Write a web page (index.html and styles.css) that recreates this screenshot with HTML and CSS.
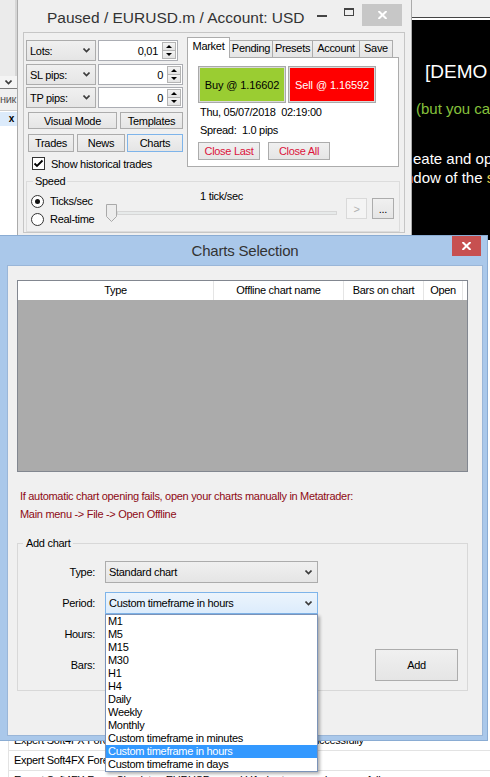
FILE: index.html
```html
<!DOCTYPE html>
<html lang="en">
<head>
  <meta charset="UTF-8">
  <meta name="viewport" content="width=device-width, initial-scale=1.0">
  <title>Forex Simulator</title>
  <link rel="stylesheet" href="styles.css">
</head>
<body>
  <!-- navigator panel, mostly hidden behind the tester -->
  <div class="nav-strip">
    <div class="nav-head"></div>
    <div class="nav-combo">
      <svg class="chev" width="7" height="5" viewBox="0 0 7 5"><polyline points="0.5,0.5 3.5,3.5 6.5,0.5"/></svg>
    </div>
    <div class="nav-row">ник</div>
    <div class="nav-sel">x</div>
  </div>

  <!-- chart window -->
  <div class="chart-win">
    <div class="chart-top"></div>
    <p class="chart-demo">[DEMO</p>
    <p class="chart-note">(but you ca</p>
    <p class="chart-line first">eate and op</p>
    <p class="chart-line second"><span class="c-orange">n</span>dow of the <span class="c-yellow">s</span></p>
  </div>

  <!-- tester window -->
  <div class="tester">
    <div class="titlebar">
      <span class="title">Paused / EURUSD.m / Account: USD</span>
      <div class="caps">
        <span class="cap cap-min"><i></i></span>
        <span class="cap cap-max"><i></i></span>
        <span class="cap-close">
          <svg width="9" height="8" viewBox="0 0 9 8"><path d="M0.5 0 L8.5 8 M8.5 0 L0.5 8"/></svg>
        </span>
      </div>
    </div>

    <div class="tester-client">
      <div class="tester-top">
        <div class="left-col">
          <div class="param-row">
            <div class="combo param">Lots:<svg class="chev" width="7" height="5" viewBox="0 0 7 5"><polyline points="0.5,0.5 3.5,3.5 6.5,0.5"/></svg></div>
            <div class="num lots"><span>0,01</span><div class="spin"><i class="up"></i><i class="down"></i></div></div>
          </div>
          <div class="param-row sl">
            <div class="combo param">SL pips:<svg class="chev" width="7" height="5" viewBox="0 0 7 5"><polyline points="0.5,0.5 3.5,3.5 6.5,0.5"/></svg></div>
            <div class="num"><span>0</span><div class="spin"><i class="up"></i><i class="down"></i></div></div>
          </div>
          <div class="param-row tp">
            <div class="combo param">TP pips:<svg class="chev" width="7" height="5" viewBox="0 0 7 5"><polyline points="0.5,0.5 3.5,3.5 6.5,0.5"/></svg></div>
            <div class="num"><span>0</span><div class="spin"><i class="up"></i><i class="down"></i></div></div>
          </div>
          <div class="btn-row mode">
            <div class="btn visual">Visual Mode</div>
            <div class="btn templates">Templates</div>
          </div>
          <div class="btn-row views">
            <div class="btn trades">Trades</div>
            <div class="btn news">News</div>
            <div class="btn charts focused">Charts</div>
          </div>
          <div class="check-row">
            <span class="checkbox"><svg width="11" height="11" viewBox="0 0 11 11"><path d="M1.5 5.5 L4 8 L9.5 2.5"/></svg></span>
            Show historical trades
          </div>
        </div>

        <div class="tabs">
          <div class="tab-strip">
            <div class="tab on t-market">Market</div>
            <div class="tab t-pending">Pending</div>
            <div class="tab t-presets">Presets</div>
            <div class="tab t-account">Account</div>
            <div class="tab t-save">Save</div>
          </div>
          <div class="tab-panel">
            <div class="deal-row">
              <div class="deal buy">Buy @ 1.16602</div>
              <div class="deal sell">Sell @ 1.16592</div>
            </div>
            <div class="info">Thu, 05/07/2018  02:19:00</div>
            <div class="info">Spread:  1.0 pips</div>
            <div class="close-row">
              <div class="btn close-btn">Close Last</div>
              <div class="btn close-btn">Close All</div>
            </div>
          </div>
        </div>
      </div>

      <fieldset class="speed">
        <legend>Speed</legend>
        <div class="speed-body">
          <div class="radios">
            <div class="radio-row"><span class="radio on"></span>Ticks/sec</div>
            <div class="radio-row"><span class="radio"></span>Real-time</div>
          </div>
          <div class="slider-box">
            <div class="rate">1 tick/sec</div>
            <div class="track">
              <svg class="thumb" width="11" height="18" viewBox="0 0 11 18"><polygon points="0.5,0.5 10.5,0.5 10.5,12.5 5.5,17.5 0.5,12.5"/></svg>
              <div class="rail"></div>
            </div>
          </div>
          <div class="btn sbtn play disabled">&gt;</div>
          <div class="btn sbtn more">...</div>
        </div>
      </fieldset>
    </div>
  </div>

  <!-- journal rows under the dialog -->
  <div class="log">
    <div class="log-row">Expert Soft4FX Forex Simulator: EURUSD.m,H1 history loaded successfully</div>
    <div class="log-row">Expert Soft4FX Forex Simulator: testing started</div>
    <div class="log-row">Expert Soft4FX Forex Simulator: EURUSD.m and H1 charts opened successfully</div>
  </div>

  <!-- Charts Selection dialog -->
  <div class="dialog">
    <div class="dlg-title">
      <span class="dlg-caption">Charts Selection</span>
      <span class="dlg-close">
        <svg width="9" height="8" viewBox="0 0 9 8"><path d="M0.5 0 L8.5 8 M8.5 0 L0.5 8"/></svg>
      </span>
    </div>
    <div class="dlg-client">
      <div class="chart-table">
        <div class="thead">
          <div class="th c-type">Type</div>
          <div class="th c-name">Offline chart name</div>
          <div class="th c-bars">Bars on chart</div>
          <div class="th c-open">Open</div>
        </div>
        <div class="tbody"></div>
      </div>

      <p class="hint">If automatic chart opening fails, open your charts manually in Metatrader:<br>Main menu -&gt; File -&gt; Open Offline</p>

      <fieldset class="add-chart">
        <legend>Add chart</legend>
        <div class="add-grid">
          <span class="lbl">Type:</span>
          <div class="combo wide">Standard chart<svg class="chev" width="7" height="5" viewBox="0 0 7 5"><polyline points="0.5,0.5 3.5,3.5 6.5,0.5"/></svg></div>
          <span></span>

          <span class="lbl">Period:</span>
          <div class="combo wide open">Custom timeframe in hours<svg class="chev" width="7" height="5" viewBox="0 0 7 5"><polyline points="0.5,0.5 3.5,3.5 6.5,0.5"/></svg></div>
          <span></span>

          <span class="lbl">Hours:</span>
          <span></span>
          <span></span>

          <span class="lbl">Bars:</span>
          <span></span>
          <div class="btn add-btn">Add</div>
        </div>
      </fieldset>
    </div>
  </div>

  <!-- open period list -->
  <ul class="droplist">
    <li>M1</li>
    <li>M5</li>
    <li>M15</li>
    <li>M30</li>
    <li>H1</li>
    <li>H4</li>
    <li>Daily</li>
    <li>Weekly</li>
    <li>Monthly</li>
    <li>Custom timeframe in minutes</li>
    <li class="sel">Custom timeframe in hours</li>
    <li>Custom timeframe in days</li>
  </ul>
</body>
</html>
```

FILE: styles.css
```css
* {
  box-sizing: border-box;
}
body {
  margin: 0;
  width: 490px;
  height: 777px;
  overflow: hidden;
  position: relative;
  background: #fff;
  font-family: "Liberation Sans", Arial, sans-serif;
  font-size: 11px;
  letter-spacing: -0.3px;
  color: #000;
}
p {
  margin: 0;
}
.chev {
  flex: none;
}
.chev polyline {
  fill: none;
  stroke: #3c3c3c;
  stroke-width: 1.6;
}

/* navigator strip */
.nav-strip {
  position: absolute;
  left: 0;
  top: 0;
  width: 17px;
  height: 240px;
  background: #fff;
  overflow: hidden;
}
.nav-head {
  height: 76px;
  background: #ebebeb;
  border-right: 2px solid #d6d6d6;
}
.nav-combo {
  height: 13px;
  background: #f4f4f4;
  border-bottom: 1px solid #7c7c7c;
  display: flex;
  align-items: center;
  padding-left: 5px;
}
.nav-row {
  height: 22px;
  line-height: 20px;
  background: #f0f0f0;
  color: #555;
  border-bottom: 1px solid #cfcfcf;
  white-space: nowrap;
}
.nav-sel {
  height: 14px;
  margin-top: 1px;
  background: #dcebfb;
  text-align: right;
  padding-right: 3px;
  line-height: 14px;
  font-weight: bold;
  font-size: 10px;
}

/* chart window */
.chart-win {
  position: absolute;
  left: 412px;
  top: 0;
  width: 78px;
  height: 240px;
  background: #000;
  overflow: hidden;
  white-space: nowrap;
  letter-spacing: 0;
}
.chart-top {
  height: 20px;
  background: #f0f0f0;
  border-bottom: 2px solid #fff;
  box-shadow: inset 0 -1px #444;
}
.chart-demo {
  margin-top: 41px;
  padding-left: 13px;
  font-size: 19px;
  line-height: 22px;
  color: #fff;
}
.chart-note {
  margin-top: 17px;
  padding-left: 4px;
  font-size: 15px;
  line-height: 18px;
  color: #86c13c;
}
.chart-line {
  font-size: 15px;
  line-height: 18px;
  color: #fff;
}
.chart-line.first {
  margin-top: 32px;
  padding-left: 1px;
}
.chart-line.second {
  margin-top: 1px;
  margin-left: -7px;
}
.c-orange {
  color: #e8912c;
}
.c-yellow {
  color: #e9d24a;
}

/* tester window */
.tester {
  position: absolute;
  left: 17px;
  top: 0;
  width: 395px;
  height: 240px;
  background: #efefef;
  border-left: 1px solid #ababab;
  border-right: 1px solid #ababab;
  padding: 0 6px 0 5px;
}
.titlebar {
  height: 32px;
  display: flex;
  align-items: flex-start;
}
.title {
  flex: none;
  margin: 8px 0 0 24px;
  font-size: 15.5px;
  line-height: 20px;
  letter-spacing: 0;
  white-space: nowrap;
  color: #333;
}
.caps {
  margin-left: auto;
  margin-right: 3px;
  margin-top: 4px;
  display: flex;
  flex: none;
}
.cap {
  width: 27px;
  height: 22px;
  display: flex;
  align-items: center;
  justify-content: center;
}
.cap-min i {
  width: 10px;
  height: 2px;
  margin-top: 1px;
  background: #444;
}
.cap-max i {
  width: 10px;
  height: 8px;
  margin-top: -6px;
  border: 1px solid #444;
  border-top-width: 2px;
}
.cap-close {
  width: 40px;
  height: 22px;
  background: #c7c7c7;
  display: flex;
  align-items: center;
  justify-content: center;
}
.cap-close path,
.dlg-close path {
  stroke: #fff;
  stroke-width: 2;
}
.tester-client {
  height: 201px;
  background: #f0f0f0;
  border: 1px solid #c6c6c6;
}
.tester-top {
  display: flex;
  padding-left: 2px;
}
.left-col {
  width: 158px;
  padding-top: 7px;
}
.param-row {
  display: flex;
  gap: 2px;
  height: 21px;
}
.param-row.sl {
  margin-top: 3px;
}
.param-row.tp {
  margin-top: 2px;
}

/* combo boxes */
.combo {
  height: 21px;
  border: 1px solid #acacac;
  background: linear-gradient(#f0f0f0, #e5e5e5);
  display: flex;
  align-items: center;
  justify-content: space-between;
  padding: 0 5px 0 3px;
}
.combo.param {
  width: 70px;
}

/* numeric up-down */
.num {
  width: 85px;
  height: 21px;
  border: 1px solid #abadb3;
  background: #fff;
  display: flex;
  align-items: center;
  justify-content: flex-end;
  padding: 1px 1px 1px 0;
}
.num.lots {
  width: 80px;
}
.num span {
  padding-right: 4px;
}
.spin {
  width: 14px;
  height: 17px;
  display: flex;
  flex-direction: column;
}
.spin i {
  flex: 1;
  border: 1px solid #b4b4b4;
  background: linear-gradient(#f4f4f4, #e3e3e3);
  display: flex;
  align-items: center;
  justify-content: center;
}
.spin i + i {
  border-top: none;
}
.spin i::after {
  content: "";
  border-left: 3px solid transparent;
  border-right: 3px solid transparent;
}
.spin .up::after {
  border-bottom: 3px solid #000;
}
.spin .down::after {
  border-top: 3px solid #000;
}

/* buttons */
.btn {
  border: 1px solid #acacac;
  background: linear-gradient(#f0f0f0, #e5e5e5);
  display: flex;
  align-items: center;
  justify-content: center;
}
.btn.focused {
  border-color: #7eb4ea;
}
.btn.disabled {
  border-color: #d9d9d9;
  background: #f4f4f4;
  color: #b0b0b0;
}
.btn-row {
  display: flex;
  margin-left: 2px;
}
.btn-row.mode {
  margin-top: 4px;
  height: 17px;
  gap: 3px;
}
.btn-row.views {
  margin-top: 5px;
  height: 18px;
}
.visual {
  width: 89px;
}
.templates {
  width: 63px;
}
.trades {
  width: 46px;
}
.news {
  width: 48px;
  margin-left: 3px;
}
.charts {
  width: 56px;
  margin-left: 2px;
}
.check-row {
  margin: 5px 0 0 6px;
  height: 13px;
  display: flex;
  align-items: center;
  gap: 6px;
}
.checkbox {
  width: 13px;
  height: 13px;
  border: 1px solid #333;
  background: #fff;
  display: flex;
  align-items: center;
  justify-content: center;
}
.checkbox path {
  fill: none;
  stroke: #000;
  stroke-width: 1.8;
}

/* tab control */
.tabs {
  width: 212px;
  margin: 4px 0 0 3px;
}
.tab-strip {
  display: flex;
  align-items: flex-end;
  height: 20px;
  position: relative;
  z-index: 1;
}
.tab {
  height: 17px;
  line-height: 15px;
  text-align: center;
  border: 1px solid #acacac;
  border-bottom: none;
  background: linear-gradient(#f0f0f0, #e5e5e5);
  margin-left: -1px;
}
.tab.on {
  height: 21px;
  line-height: 17px;
  margin: 0 0 -1px 0;
  background: #fff;
}
.t-market {
  width: 43px;
}
.t-pending {
  width: 44px;
}
.t-presets {
  width: 41px;
}
.t-account {
  width: 48px;
}
.t-save {
  width: 34px;
}
.tab-panel {
  height: 110px;
  border: 1px solid #acacac;
  background: #fff;
  padding: 8px 0 0 10px;
}
.deal-row {
  display: flex;
  gap: 2px;
}
.deal {
  width: 88px;
  height: 37px;
  border: 1px solid #a9a9a9;
  box-shadow: inset 0 0 0 1px #d9d9d9;
  display: flex;
  align-items: center;
  justify-content: center;
  letter-spacing: -0.1px;
}
.buy {
  background: #9acd32;
}
.sell {
  background: #ff0000;
  color: #fff;
}
.info {
  height: 18px;
  line-height: 18px;
  padding-left: 2px;
  white-space: pre;
}
.info:first-of-type {
  margin-top: 2px;
}
.close-row {
  display: flex;
  gap: 8px;
  margin-top: 3px;
}
.close-btn {
  width: 62px;
  height: 18px;
  color: #dc143c;
}

/* speed group */
.speed {
  margin: 5px 4px 0 2px;
  padding: 1px 0 2px 4px;
  border: 1px solid #dcdcdc;
  min-width: 0;
}
.speed legend {
  padding: 0 2px;
  margin-left: 2px;
  line-height: 13px;
}
.speed-body {
  display: flex;
  height: 40px;
}
.radios {
  width: 75px;
  margin-top: 3px;
}
.radio-row {
  height: 18px;
  display: flex;
  align-items: center;
  gap: 6px;
}
.radio {
  width: 13px;
  height: 13px;
  border: 1px solid #333;
  border-radius: 50%;
  background: #fff;
  display: flex;
  align-items: center;
  justify-content: center;
}
.radio.on::after {
  content: "";
  width: 5px;
  height: 5px;
  border-radius: 50%;
  background: #111;
}
.slider-box {
  width: 231px;
}
.rate {
  height: 14px;
  line-height: 14px;
  text-align: center;
}
.track {
  margin-top: 1px;
  height: 18px;
  display: flex;
  align-items: center;
}
.thumb {
  flex: none;
}
.thumb polygon {
  fill: #ececec;
  stroke: #a9a9a9;
}
.rail {
  flex: 1;
  height: 4px;
  margin-top: -1px;
  border: 1px solid #d6d6d6;
  background: #e7eaea;
}
.sbtn {
  width: 21px;
  height: 21px;
  margin-top: 9px;
}
.play {
  margin-left: 9px;
}
.more {
  width: 22px;
  margin-left: 5px;
}

/* journal */
.log {
  position: absolute;
  left: 0;
  top: 731px;
  width: 490px;
  padding-left: 8px;
}
.log-row {
  height: 20px;
  line-height: 19px;
  border-left: 1px solid #e3e3e3;
  border-bottom: 1px solid #e3e3e3;
  padding-left: 5px;
  white-space: nowrap;
  overflow: hidden;
}

/* Charts Selection dialog */
.dialog {
  position: absolute;
  left: -1px;
  top: 235px;
  width: 489px;
  height: 506px;
  background: #aac8ea;
  border: 1px solid #8aacd3;
  padding: 0 4px 4px 7px;
  display: flex;
  flex-direction: column;
}
.dlg-title {
  height: 29px;
  display: grid;
  grid-template-columns: 1fr auto 1fr;
  align-items: center;
}
.dlg-caption {
  grid-column: 2;
  font-size: 15px;
  letter-spacing: -0.2px;
  color: #333;
}
.dlg-close {
  grid-column: 3;
  justify-self: end;
  align-self: start;
  width: 29px;
  height: 20px;
  margin-right: 2px;
  background: #c75050;
  display: flex;
  align-items: center;
  justify-content: center;
}
.dlg-client {
  flex: 1;
  background: #f0f0f0;
  border: 1px solid #9ab6d8;
  padding-top: 14px;
}
.chart-table {
  width: 451px;
  height: 192px;
  margin-left: 9px;
  border: 1px solid #828790;
  display: flex;
  flex-direction: column;
}
.thead {
  height: 19px;
  background: #fff;
  display: flex;
}
.th {
  text-align: center;
  line-height: 19px;
  border-right: 1px solid #e5e5e5;
}
.c-type {
  width: 196px;
}
.c-name {
  width: 130px;
}
.c-bars {
  width: 80px;
}
.c-open {
  width: 39px;
}
.tbody {
  flex: 1;
  background: #ababab;
}
.hint {
  margin-top: 15px;
  padding-left: 12px;
  line-height: 18px;
  color: #8e0a14;
}
.add-chart {
  margin: 14px 14px 0 9px;
  padding: 11px 0 14px 0;
  border: 1px solid #d8d8d8;
  min-width: 0;
}
.add-chart legend {
  margin-left: 5px;
  padding: 0 3px;
  line-height: 13px;
}
.add-grid {
  display: grid;
  grid-template-columns: 77px 213px 83px;
  grid-template-rows: repeat(4, 22px);
  column-gap: 10px;
  row-gap: 9px;
}
.lbl {
  text-align: right;
  line-height: 22px;
}
.combo.wide {
  height: 22px;
}
.combo.open {
  border-color: #7eb4ea;
  background: linear-gradient(#ecf4fc, #dcecfc);
}
.add-btn {
  height: 32px;
  margin: -5px 0 -5px 47px;
  width: 83px;
}

/* dropdown list of the Period combo */
.droplist {
  position: absolute;
  left: 105px;
  top: 614px;
  width: 213px;
  height: 158px;
  margin: 0;
  padding: 0;
  list-style: none;
  background: #fff;
  border: 1px solid #7b93b8;
  box-shadow: 2px 2px 3px rgba(0, 0, 0, 0.3);
}
.droplist li {
  height: 13px;
  line-height: 13px;
  padding-left: 2px;
  white-space: nowrap;
}
.droplist li.sel {
  background: #3399ff;
  color: #fff;
}
```
